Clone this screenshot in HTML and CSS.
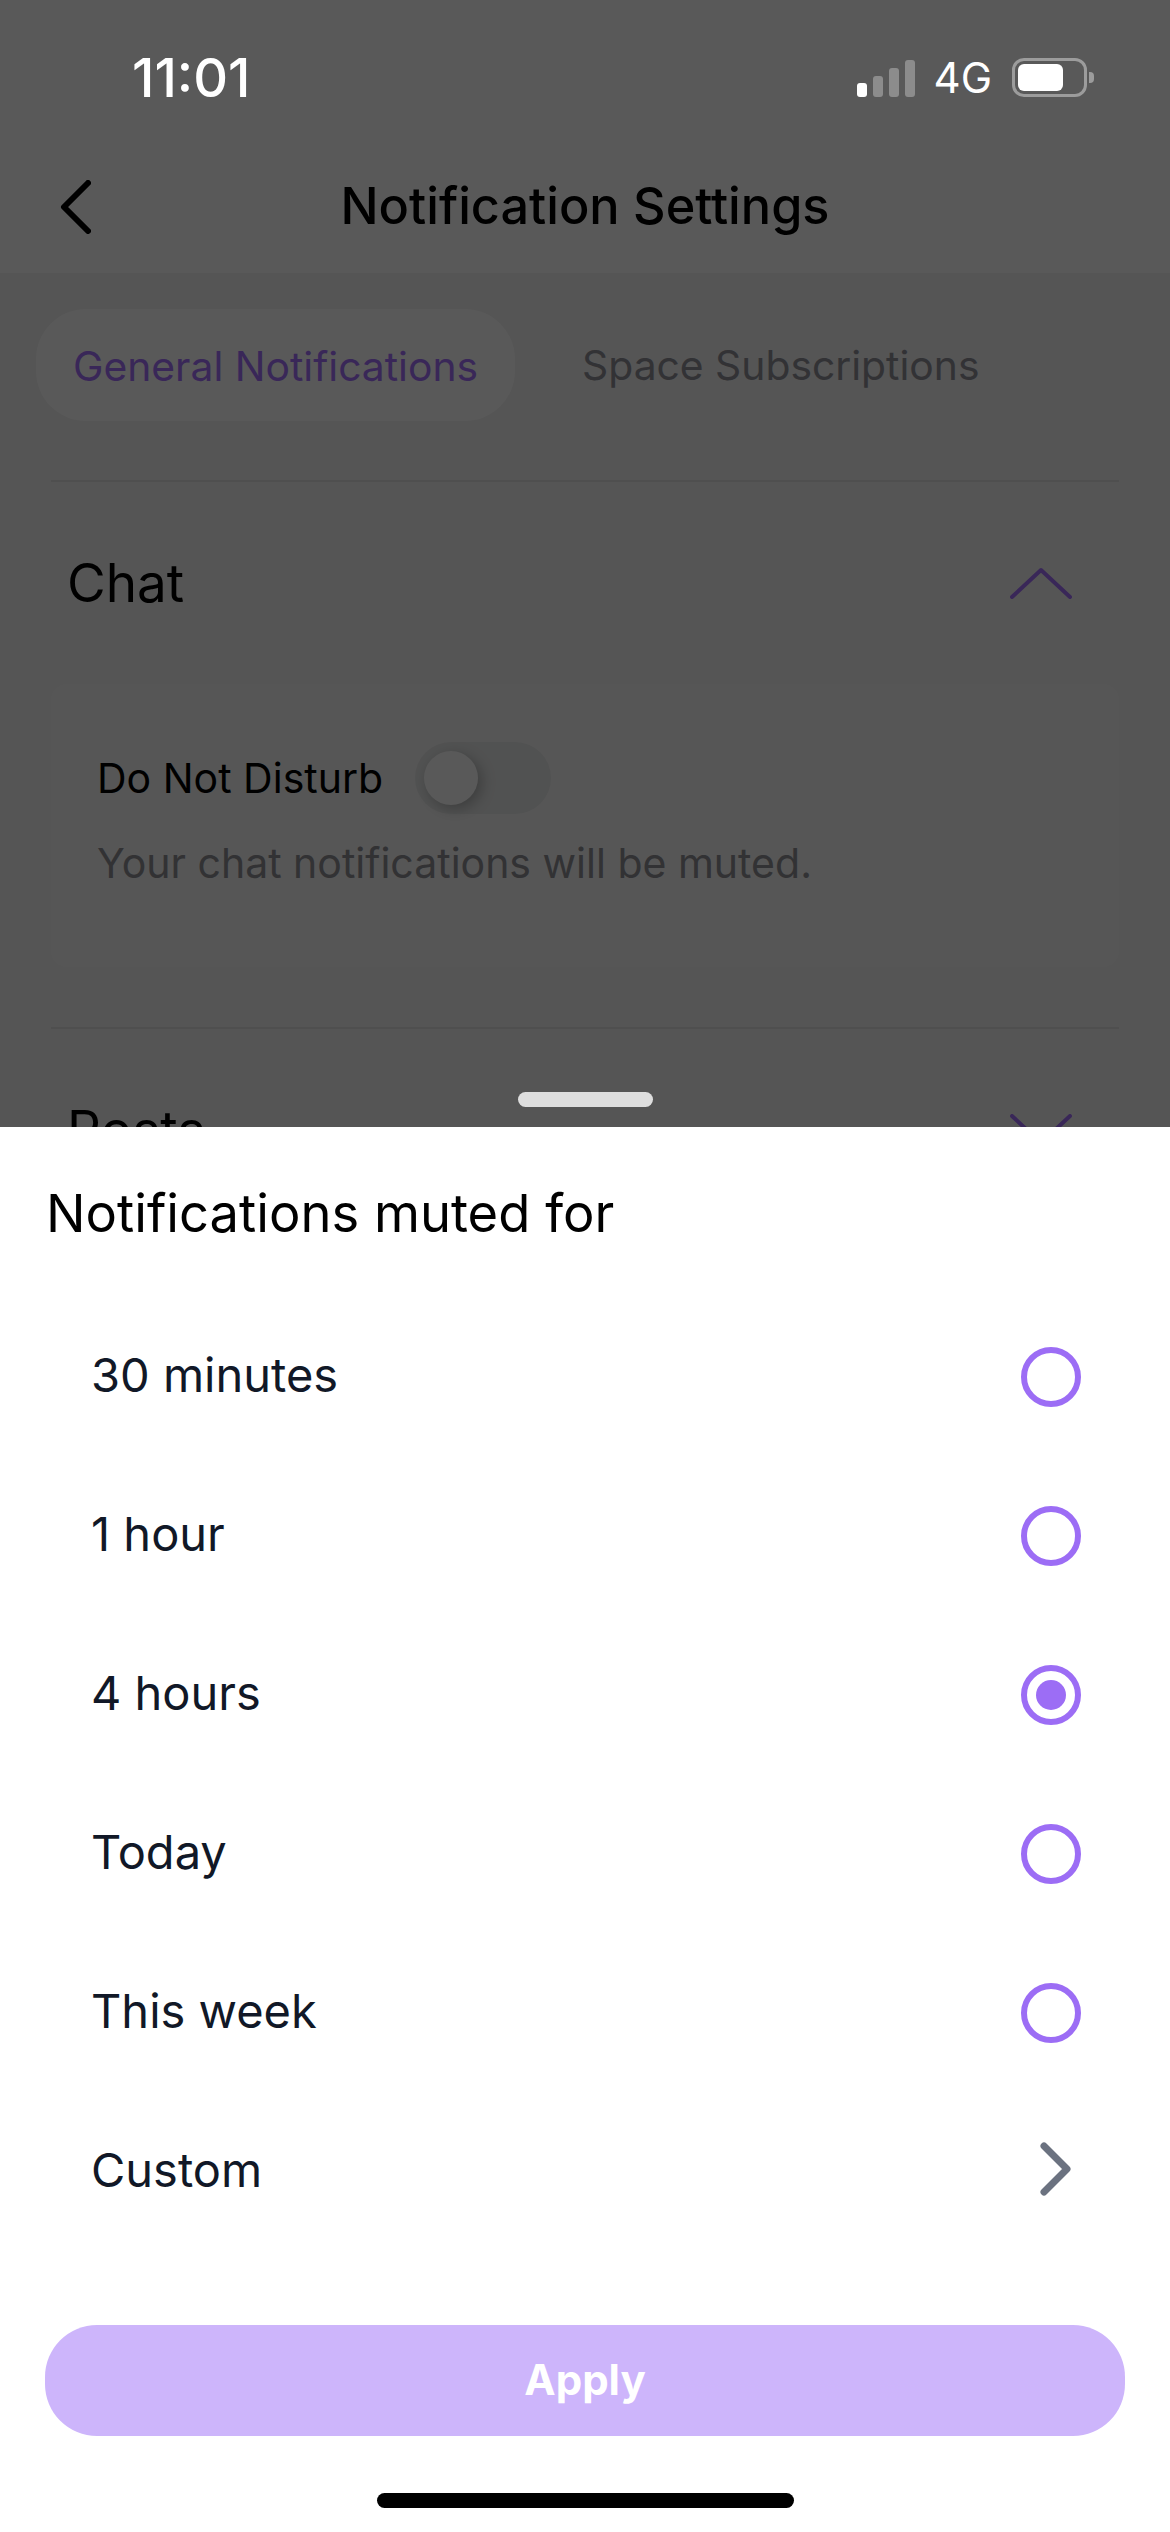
FILE: index.html
```html
<!DOCTYPE html>
<html lang="en">

<head>
    <meta charset="UTF-8" />
    <title>Notification Settings</title>
    <link rel="stylesheet" href="styles.css">
</head>

<body>

    <div id="screen">
        <header class="top-bar">
            <div class="status-bar">
                <span class="clock">11:01</span>
                <div class="status-icons">
                    <div class="signal">
                        <i class="bar bar-1 bar-on"></i>
                        <i class="bar bar-2"></i>
                        <i class="bar bar-3"></i>
                        <i class="bar bar-4"></i>
                    </div>
                    <span class="network">4G</span>
                    <div class="battery"><i class="battery-fill"></i></div>
                    <i class="battery-nub"></i>
                </div>
            </div>
            <div class="nav-bar">
                <svg class="back-icon" width="31" height="54" viewBox="0 0 31 54">
                    <path d="M28 3 L4 27 L28 51" />
                </svg>
                <h1>Notification Settings</h1>
            </div>
        </header>

        <div class="tabs">
            <span class="tab tab-active">General Notifications</span>
            <span class="tab">Space Subscriptions</span>
        </div>

        <section class="section">
            <div class="section-head">
                <h2>Chat</h2>
                <svg class="section-chevron" width="62" height="32" viewBox="0 0 62 32">
                    <path d="M2 30 L31 3 L60 30" />
                </svg>
            </div>
            <div class="card">
                <div class="dnd-row">
                    <span class="dnd-label">Do Not Disturb</span>
                    <div class="toggle"><i class="knob"></i></div>
                </div>
                <p class="dnd-help">Your chat notifications will be muted.</p>
            </div>
        </section>

        <section class="section">
            <div class="section-head">
                <h2>Posts</h2>
                <svg class="section-chevron" width="62" height="32" viewBox="0 0 62 32">
                    <path d="M2 2 L31 29 L60 2" />
                </svg>
            </div>
        </section>

        <div class="scrim"></div>

        <div class="sheet">
            <i class="sheet-handle"></i>
            <h3>Notifications muted for</h3>
            <ul class="options">
                <li class="option"><span>30 minutes</span><i class="radio"></i></li>
                <li class="option"><span>1 hour</span><i class="radio"></i></li>
                <li class="option"><span>4 hours</span><i class="radio radio-on"></i></li>
                <li class="option"><span>Today</span><i class="radio"></i></li>
                <li class="option"><span>This week</span><i class="radio"></i></li>
                <li class="option">
                    <span>Custom</span>
                    <svg class="custom-chevron" width="31" height="54" viewBox="0 0 31 54">
                        <path d="M4 4 L27 27 L4 50" />
                    </svg>
                </li>
            </ul>
            <button class="apply" type="button">Apply</button>
            <i class="home-bar"></i>
        </div>
    </div>

</body>

</html>
```

FILE: styles.css
```css
* {
    box-sizing: border-box;
}

html,
body {
    margin: 0;
    padding: 0;
}

body {
    font-family: Inter, "Liberation Sans", sans-serif;
    background-color: #f3f3f3;
}

i {
    display: block;
}

#screen {
    position: relative;
    width: 1170px;
    height: 2532px;
    overflow: hidden;
    background-color: #f3f3f3;
}

/* top of the page, under the scrim except the status bar */
.top-bar {
    height: 273px;
    background-color: #fff;
}

.status-bar {
    position: relative;
    z-index: 2;
    height: 138px;
    display: flex;
    justify-content: space-between;
    align-items: center;
    padding: 17px 76px 0 132px;
    color: #fff;
}

.clock {
    font-size: 54px;
    font-weight: 500;
}

.status-icons {
    display: flex;
    align-items: center;
}

.signal {
    display: flex;
    align-items: flex-end;
    gap: 6px;
    height: 37px;
    margin-top: 1px;
}

.bar {
    width: 10px;
    border-radius: 3px;
    background-color: #8c8c8c;
}

.bar-1 {
    height: 14px;
}

.bar-2 {
    height: 21px;
}

.bar-3 {
    height: 29px;
}

.bar-4 {
    height: 37px;
}

.bar-on {
    background-color: #fff;
}

.network {
    font-size: 42px;
    margin-left: 19px;
    margin-right: 20px;
}

.battery {
    width: 75px;
    height: 39px;
    padding: 3px;
    border: 3px solid #9c9c9c;
    border-radius: 12px;
}

.battery-fill {
    width: 45px;
    height: 27px;
    border-radius: 6px;
    background-color: #fff;
}

.battery-nub {
    width: 5px;
    height: 11px;
    margin-left: 2px;
    border-radius: 0 4px 4px 0;
    background-color: #9c9c9c;
}

.nav-bar {
    position: relative;
    display: flex;
    justify-content: center;
    align-items: center;
    height: 135px;
}

.nav-bar h1 {
    margin: 0;
    font-size: 50.4px;
    font-weight: 500;
    color: #000;
}

.back-icon {
    position: absolute;
    left: 60px;
    top: 42px;
}

.back-icon path {
    fill: none;
    stroke: #000;
    stroke-width: 6;
    stroke-linecap: round;
    stroke-linejoin: round;
}

.tabs {
    display: flex;
    align-items: center;
    gap: 67px;
    padding: 35px 36px 0;
}

.tab {
    font-size: 40.8px;
    line-height: 114px;
    color: #8f9097;
}

.tab-active {
    padding: 0 37px;
    height: 112px;
    border-radius: 50px;
    background-color: #ffffff;
    color: #a46ffb;
}

.section {
    margin: 0 51px;
    border-top: 2px solid #e3e3e3;
}

.tabs + .section {
    margin-top: 58px;
}

.section-head {
    display: flex;
    justify-content: space-between;
    align-items: center;
    height: 202px;
    padding: 0 47px 0 16px;
}

.section-head h2 {
    margin: 0;
    font-size: 53px;
    font-weight: 400;
    color: #000;
}

.section-chevron path {
    fill: none;
    stroke: #a46ffb;
    stroke-width: 4;
    stroke-linecap: round;
    stroke-linejoin: round;
}

.card {
    height: 283px;
    margin-bottom: 60px;
    padding: 58px 46px 0;
    border-radius: 16px;
    background-color: #f6f6f6;
}

.dnd-row {
    display: flex;
    align-items: center;
    gap: 32px;
    height: 72px;
}

.dnd-label {
    font-size: 41px;
    color: #000;
}

.toggle {
    width: 136px;
    height: 72px;
    padding: 9px;
    border-radius: 36px;
    background-color: #e8eaea;
}

.knob {
    width: 54px;
    height: 54px;
    border-radius: 50%;
    background-color: #fff;
    box-shadow: 4px 4px 14px rgba(0, 0, 0, 0.25);
}

.dnd-help {
    margin: 24px 0 0;
    font-size: 41px;
    color: #8f8f94;
}

/* dark layer over the settings page */
.scrim {
    position: absolute;
    inset: 0;
    z-index: 1;
    background-color: rgba(0, 0, 0, 0.65);
}

.sheet {
    position: absolute;
    left: 0;
    right: 0;
    top: 1127px;
    bottom: 0;
    z-index: 3;
    background-color: #fff;
}

.sheet-handle {
    position: absolute;
    left: 518px;
    top: -35px;
    width: 135px;
    height: 15px;
    border-radius: 8px;
    background-color: #dedede;
}

.sheet h3 {
    margin: 0;
    padding: 56px 46px 0;
    height: 170px;
    font-size: 52.5px;
    line-height: 60px;
    font-weight: 400;
    color: #000;
}

.options {
    margin: 0;
    padding: 0;
    list-style: none;
}

.option {
    display: flex;
    justify-content: space-between;
    align-items: center;
    height: 159px;
    padding: 0 89px 0 91px;
    font-size: 47px;
    color: #111827;
}

.option span {
    margin-top: -4px;
}

.radio {
    width: 60px;
    height: 60px;
    border: 6px solid #9c6df5;
    border-radius: 50%;
}

.radio-on {
    padding: 9px;
    background-color: #9c6df5;
    background-clip: content-box;
}

.custom-chevron {
    margin-right: 10px;
    margin-top: -6px;
}

.custom-chevron path {
    fill: none;
    stroke: #6b7280;
    stroke-width: 7;
    stroke-linecap: round;
    stroke-linejoin: round;
}

.apply {
    display: block;
    width: 1080px;
    height: 111px;
    margin: 74px 45px 0;
    border: none;
    border-radius: 52px;
    background-color: #cdb5fb;
    color: #fff;
    font-family: inherit;
    font-size: 42px;
    font-weight: 700;
    padding: 0 0 2px;
}

.home-bar {
    width: 417px;
    height: 15px;
    margin: 57px auto 0;
    border-radius: 8px;
    background-color: #000;
}
```
